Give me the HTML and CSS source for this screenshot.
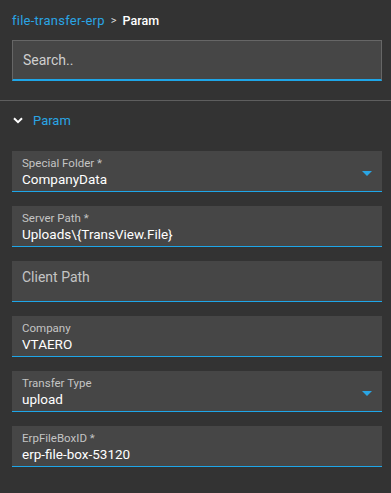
FILE: index.html
```html
<!DOCTYPE html>
<html lang="en">
<head>
    <meta charset="UTF-8">
    <meta name="viewport" content="width=device-width, initial-scale=1.0">
    <title>Param</title>
    <link rel="stylesheet" href="styles.css">
</head>
<body>
    <div class="page">
        <div class="breadcrumb">
            <a class="crumb-link">file-transfer-erp</a>
            <span class="crumb-sep">&gt;</span>
            <span class="crumb-current">Param</span>
        </div>

        <div class="search-box">
            <input type="text" class="search-input" placeholder="Search..">
        </div>
    </div>

    <div class="divider"></div>

    <div class="page">
        <div class="section-header">
            <svg class="chevron" width="10" height="7" viewBox="0 0 10 7">
                <path d="M1 1.2 L5 5.2 L9 1.2" fill="none" stroke="#fff" stroke-width="2"/>
            </svg>
            <span class="section-title">Param</span>
        </div>

        <div class="fields">
            <div class="field select">
                <div class="field-label">Special Folder *</div>
                <div class="field-value">CompanyData</div>
                <span class="caret"></span>
            </div>
            <div class="field">
                <div class="field-label">Server Path *</div>
                <div class="field-value">Uploads\{TransView.File}</div>
            </div>
            <div class="field empty">
                <div class="field-label">Client Path</div>
            </div>
            <div class="field">
                <div class="field-label">Company</div>
                <div class="field-value">VTAERO</div>
            </div>
            <div class="field select">
                <div class="field-label">Transfer Type</div>
                <div class="field-value">upload</div>
                <span class="caret"></span>
            </div>
            <div class="field">
                <div class="field-label">ErpFileBoxID *</div>
                <div class="field-value">erp-file-box-53120</div>
            </div>
        </div>
    </div>
</body>
</html>
```

FILE: styles.css
```css
body {
    margin: 0;
    font-family: Roboto, "Noto Sans", sans-serif;
    background-color: #333333;
    color: #fff;
}
.page {
    padding: 0 9px 0 12px;
}
.breadcrumb {
    display: flex;
    align-items: center;
    gap: 6px;
    height: 40px;
    font-size: 13px;
}
.crumb-link {
    color: #2aa5e4;
    letter-spacing: 0.25px;
}
.crumb-sep {
    color: #ddd;
    font-size: 11px;
}
.crumb-current {
    color: #fff;
    font-size: 12.5px;
    font-weight: 500;
}
.search-box {
    height: 38px;
    border: 1px solid #666;
    border-bottom: 2px solid #1ea6e8;
    background-color: #464646;
    display: flex;
    align-items: center;
}
.search-input {
    flex: 1;
    border: none;
    outline: none;
    background: transparent;
    color: #fff;
    font-family: inherit;
    font-size: 14px;
    padding: 0 10px;
}
.search-input::placeholder {
    color: #cfcfcf;
}
.divider {
    margin-top: 19px;
    height: 1px;
    background-color: #5e5e5e;
}
.section-header {
    display: flex;
    align-items: center;
    height: 39px;
    gap: 10px;
    padding-left: 1px;
}
.section-title {
    color: #2aa5e4;
    font-size: 13px;
}
.fields {
    display: flex;
    flex-direction: column;
    gap: 14px;
    margin-top: 11px;
}
.field {
    position: relative;
    height: 35px;
    background-color: #464646;
    border-bottom: 1px solid #1ea6e8;
    padding: 5px 10px 0;
}
.field-label {
    font-size: 11.5px;
    color: #c4c4c4;
    line-height: 15px;
}
.field-value {
    font-size: 13.5px;
    color: #fff;
    line-height: 17px;
}
.field.empty {
    height: 32px;
    padding-top: 8px;
}
.field.empty .field-label {
    font-size: 14px;
    line-height: 17px;
}
.caret {
    position: absolute;
    right: 10px;
    top: 20px;
    width: 0;
    height: 0;
    border-left: 5px solid transparent;
    border-right: 5px solid transparent;
    border-top: 5px solid #2aa5e4;
}
```
